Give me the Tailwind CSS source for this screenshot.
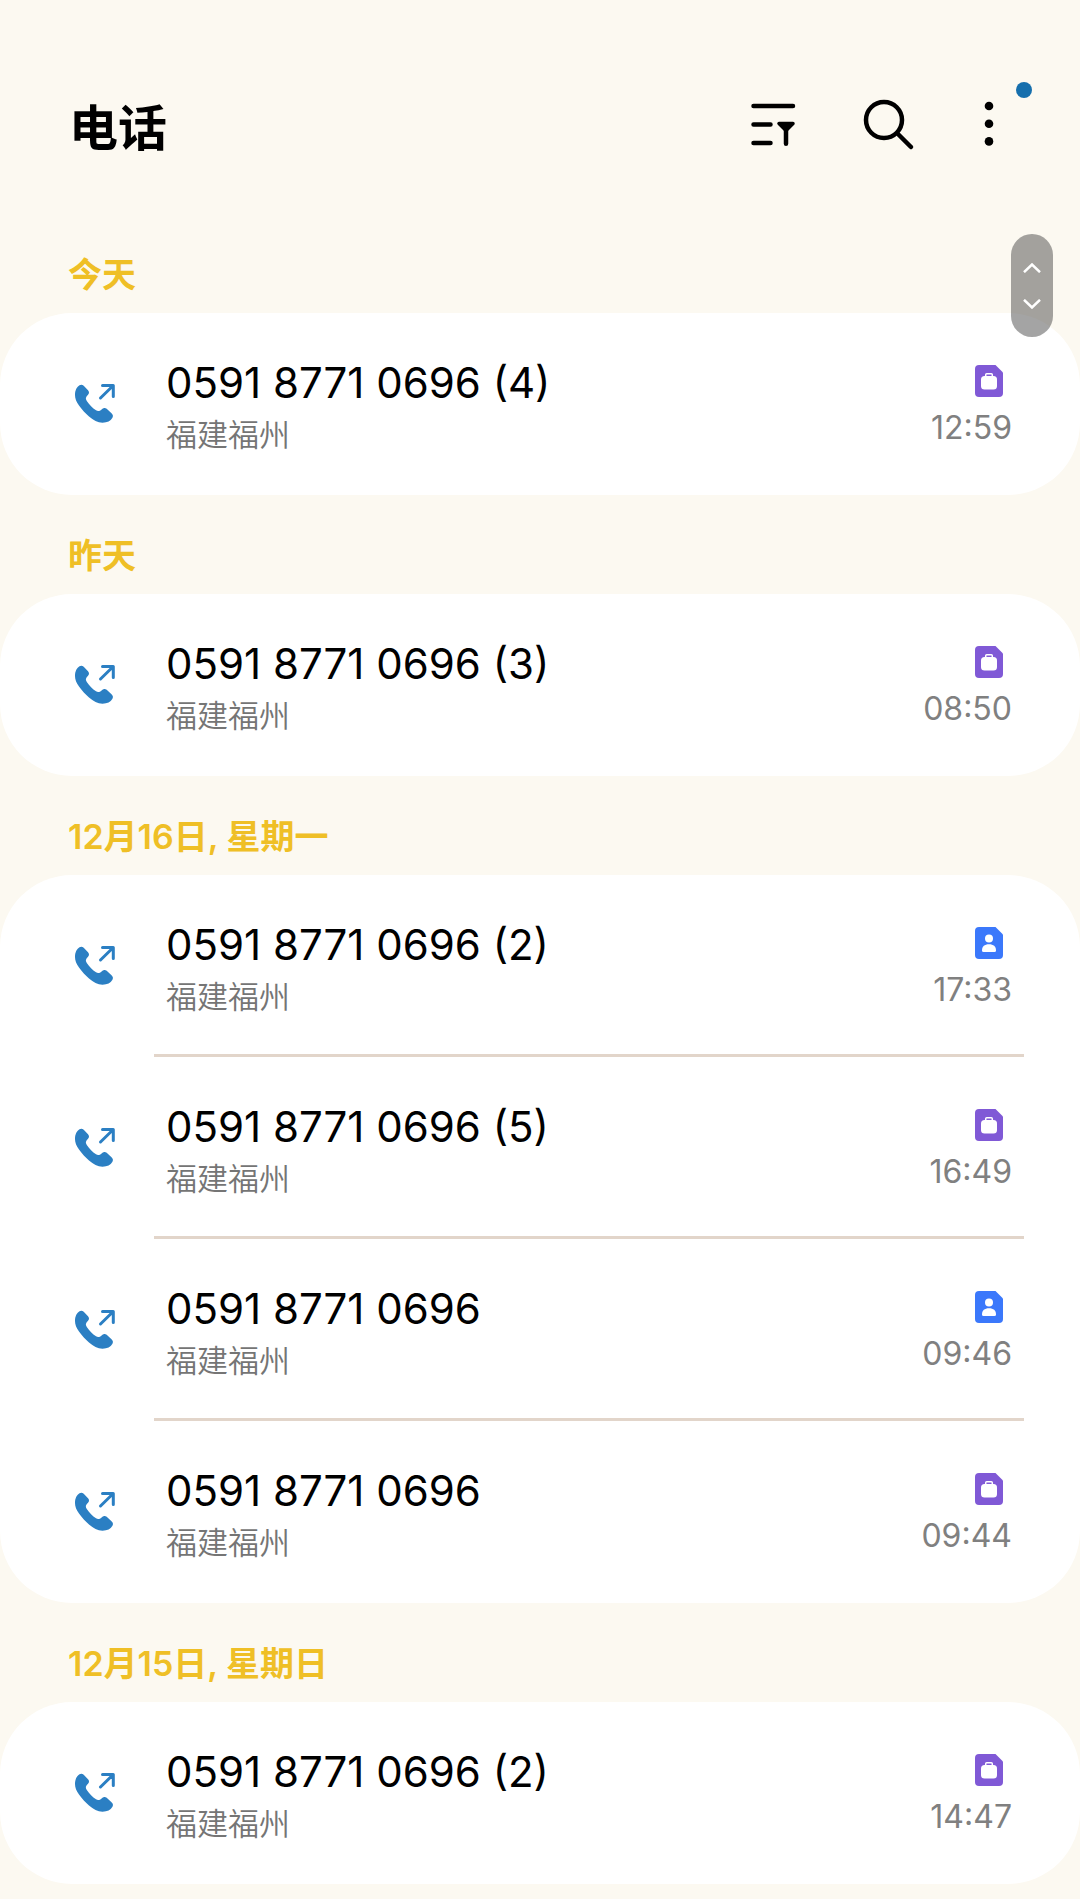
<!DOCTYPE html>
<html lang="zh-CN">
<head>
<meta charset="utf-8">
<meta name="viewport" content="width=device-width, initial-scale=1">
<title>电话</title>
<script src="https://cdn.jsdelivr.net/npm/@tailwindcss/browser@4"></script>
</head>
<body class="min-h-screen bg-[#fcf9f1] font-['Inter','Noto_Sans_CJK_SC',sans-serif] text-black">

<svg class="hidden" aria-hidden="true">
  <symbol id="outgoing" viewBox="0 0 42 42">
    <path fill="#2b7fc3" d="M1 12C1 7 3 4 5.500 2.300C7 1.400 8.500 1.600 9.700 2.800L14 7.300C15.400 8.800 15.300 10.300 14 11.800C11.500 14.300 11.300 15.800 12.800 17.900C15.500 21.700 18.500 24.800 22 27.300C23.800 28.600 25.600 28.300 27.600 26.400C29.500 24.700 31 24.400 32.700 25.800L37.500 30.300C39.200 31.900 39.300 33.300 38.300 35.100C36.500 38 33.500 39.700 28.500 39.800C23.500 39.800 19.500 37.500 15 33.600C11.500 30.600 8 26.800 5 22.600C2.300 18.800 1 15.500 1 12Z"/>
    <path fill="none" stroke="#2b7fc3" stroke-width="3" stroke-linecap="round" stroke-linejoin="round" d="M28.500 2.500H39.300V13.500M39 2.800L26.500 15"/>
  </symbol>
  <symbol id="work" viewBox="0 0 28 32">
    <path fill="#8059d6" d="M4 0H20.500L28 7.500V28A4 4 0 0 1 24 32H4A4 4 0 0 1 0 28V4A4 4 0 0 1 4 0Z"/>
    <rect x="6" y="11" width="16" height="13.500" rx="3.500" fill="#fff"/>
    <path fill="none" stroke="#fff" stroke-width="1.500" d="M10.700 11.500V9.800A1 1 0 0 1 11.700 8.800H16.300A1 1 0 0 1 17.300 9.800V11.500"/>
  </symbol>
  <symbol id="personal" viewBox="0 0 28 32">
    <path fill="#3b78fb" d="M4 0H20.500L28 7.500V28A4 4 0 0 1 24 32H4A4 4 0 0 1 0 28V4A4 4 0 0 1 4 0Z"/>
    <circle cx="14" cy="11.500" r="4" fill="#fff"/>
    <path fill="#fff" d="M7 23.500C7 19.500 9.500 17.300 14 17.300S21 19.500 21 23.500Q21 25 19.500 25H8.500Q7 25 7 23.500Z"/>
  </symbol>
</svg>

<header class="flex h-[214px] items-start justify-between pt-[94px] pr-[76px] pl-[69px]">
  <h1 class="pt-[3px] text-[49px] leading-[64px] font-semibold">电话</h1>
  <div class="flex items-center gap-14">
    <button type="button" aria-label="筛选" class="size-[60px]">
      <svg class="size-full" viewBox="0 0 60 60" fill="none" stroke="#000" stroke-width="4.500" stroke-linecap="round">
        <path d="M11.500 12H51M11.500 30.500H28.500M11.500 49H28.500M44 33V49.700"/>
        <path d="M37 29.500H51L44 36.500Z" fill="#000" stroke-width="3.500" stroke-linejoin="round"/>
      </svg>
    </button>
    <button type="button" aria-label="搜索" class="size-[60px]">
      <svg class="size-full" viewBox="0 0 60 60" fill="none" stroke="#000" stroke-width="4.500" stroke-linecap="round">
        <circle cx="26" cy="26" r="18"/>
        <path d="M39.500 39.500L53 53"/>
      </svg>
    </button>
    <button type="button" aria-label="更多选项" class="relative h-[60px] w-[30px]">
      <svg class="size-full" viewBox="0 0 30 60">
        <circle cx="15" cy="12" r="4.300"/><circle cx="15" cy="29.700" r="4.300"/><circle cx="15" cy="47.400" r="4.300"/>
      </svg>
      <span class="absolute -top-3 -right-7 size-4 rounded-full bg-[#166fad]"></span>
    </button>
  </div>
</header>

<div class="absolute top-[234px] right-[27px] flex h-[103px] w-[42px] flex-col items-center justify-center gap-[26px] rounded-full bg-[#4a4a4a]/50">
  <svg class="h-[10px] w-[18px]" viewBox="0 0 18 10" fill="none" stroke="#fff" stroke-width="2.500"><path d="M1 9.200L9 1.500L17 9.200"/></svg>
  <svg class="h-[10px] w-[18px]" viewBox="0 0 18 10" fill="none" stroke="#fff" stroke-width="2.500"><path d="M1 .8L9 8.500L17 .8"/></svg>
</div>

<main id="log" class="pb-[15px]"></main>

<script>
  const groups = [
    ["今天", [["0591 8771 0696 (4)", "work", "12:59"]]],
    ["昨天", [["0591 8771 0696 (3)", "work", "08:50"]]],
    ["12月16日, 星期一", [
      ["0591 8771 0696 (2)", "personal", "17:33"],
      ["0591 8771 0696 (5)", "work", "16:49"],
      ["0591 8771 0696", "personal", "09:46"],
      ["0591 8771 0696", "work", "09:44"]
    ]],
    ["12月15日, 星期日", [["0591 8771 0696 (2)", "work", "14:47"]]]
  ];

  const row = ([number, sim, time]) => `
    <li class="group">
      <a href="tel:059187710696" class="flex h-[182px] items-center pr-14 pl-[74px]">
        <svg class="mr-[38px] size-[42px] shrink-0" role="img" aria-label="拨出"><use href="#outgoing"/></svg>
        <div class="flex h-full flex-1 justify-between border-b-3 border-[#e2d5ca] px-3 group-last:border-transparent">
          <div class="pt-11">
            <p class="text-[42px] leading-[52px] whitespace-nowrap">${number}</p>
            <p class="text-[31px] leading-[52px] font-[350] text-[#757575]">福建福州</p>
          </div>
          <div class="flex flex-col items-end pt-[52px]">
            <svg class="mr-[9px] mb-[11px] h-8 w-7" aria-hidden="true"><use href="#${sim}"/></svg>
            <time class="text-[32px] leading-[40px] text-[#808080]">${time}</time>
          </div>
        </div>
      </a>
    </li>`;

  document.getElementById("log").innerHTML = groups.map(([day, calls]) => `
    <section>
      <h2 class="h-[99px] pt-[38px] pl-[68px] text-[34px] leading-[46px] font-semibold text-[#efbf26]">${day}</h2>
      <ul class="rounded-[72px] bg-white">${calls.map(row).join("")}</ul>
    </section>`).join("");
</script>
</body>
</html>
